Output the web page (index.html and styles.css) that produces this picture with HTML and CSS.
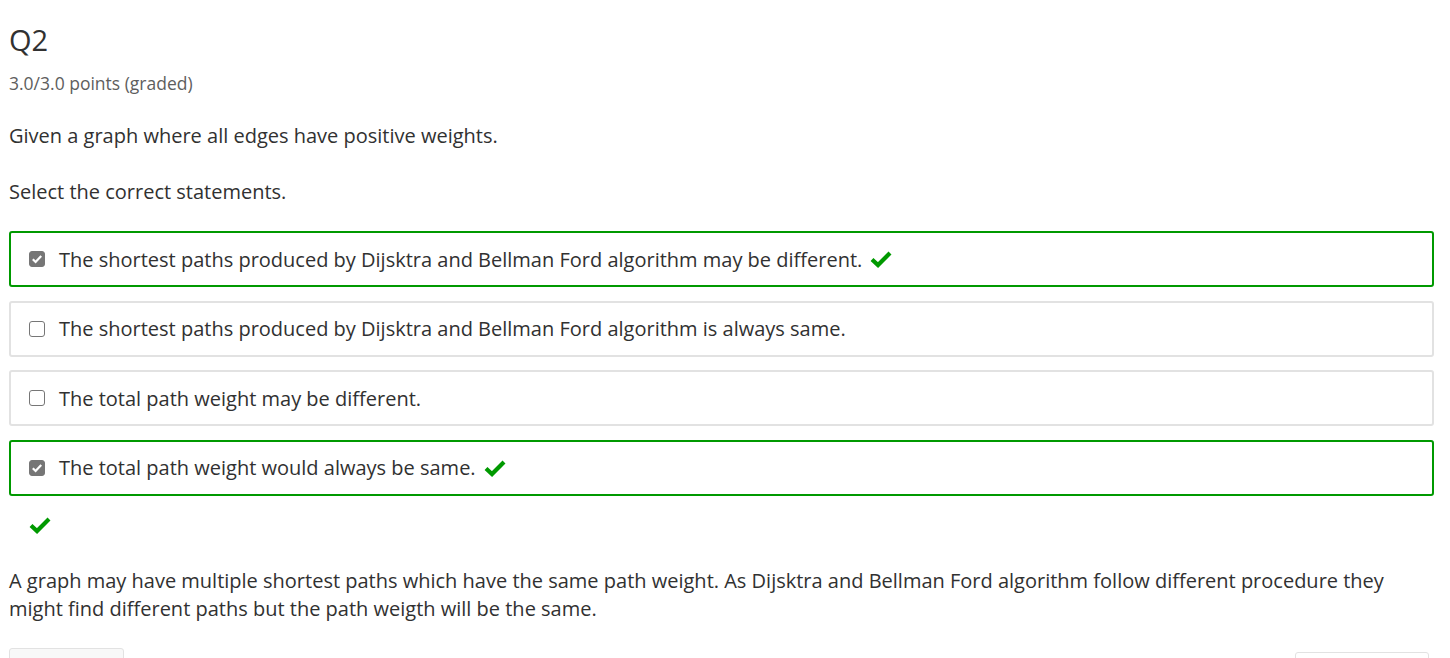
FILE: index.html
```html
<!DOCTYPE html>
<html>
<head>
<meta charset="utf-8">
<link rel="stylesheet" href="styles.css">
</head>
<body>
<div class="problem">
  <h2 class="title">Q2</h2>
  <div class="points">3.0/3.0 points (graded)</div>
  <p class="prompt">Given a graph where all edges have positive weights.</p>
  <p class="prompt">Select the correct statements.</p>
  <div class="choices">
    <label class="choice correct">
      <span class="box checked"><svg viewBox="0 0 16 16" width="16" height="16"><path d="M3.8 8.2 L6.6 11 L12.2 5" fill="none" stroke="#fff" stroke-width="2.2"/></svg></span>
      <span class="ctext">The shortest paths produced by Dijsktra and Bellman Ford algorithm may be different.</span>
      <svg class="tick" viewBox="0 0 22 18" width="22" height="18"><path d="M2 9.5 L8 15 L20 3" fill="none" stroke="#009900" stroke-width="4.2"/></svg>
    </label>
    <label class="choice">
      <span class="box"></span>
      <span class="ctext">The shortest paths produced by Dijsktra and Bellman Ford algorithm is always same.</span>
    </label>
    <label class="choice">
      <span class="box"></span>
      <span class="ctext">The total path weight may be different.</span>
    </label>
    <label class="choice correct">
      <span class="box checked"><svg viewBox="0 0 16 16" width="16" height="16"><path d="M3.8 8.2 L6.6 11 L12.2 5" fill="none" stroke="#fff" stroke-width="2.2"/></svg></span>
      <span class="ctext">The total path weight would always be same.</span>
      <svg class="tick" viewBox="0 0 22 18" width="22" height="18"><path d="M2 9.5 L8 15 L20 3" fill="none" stroke="#009900" stroke-width="4.2"/></svg>
    </label>
  </div>
  <div class="status"><svg viewBox="0 0 22 18" width="22" height="18"><path d="M2 9.5 L8 15 L20 3" fill="none" stroke="#009900" stroke-width="4.2"/></svg></div>
  <p class="explain">A graph may have multiple shortest paths which have the same path weight. As Dijsktra and Bellman Ford algorithm follow different procedure they might find different paths but the path weigth will be the same.</p>
  <div class="actions">
    <div class="btn left"></div>
    <div class="btn right"></div>
  </div>
</div>
</body>
</html>
```
FILE: styles.css
```css
html, body { margin: 0; padding: 0; background: #fff; }
body { font-family: "Open Sans", "Liberation Sans", sans-serif; color: #313131; overflow: hidden; }
.problem { padding: 0 16px 0 9px; }
.title { margin: 0; padding-top: 20px; font-size: 29px; font-weight: 400; line-height: 40px; color: #313131; }
.points { margin-top: 12px; font-size: 17.5px; color: #5e5e5e; line-height: 22px; }
.prompt { margin: 0; font-size: 20px; line-height: 28px; }
.points + .prompt { margin-top: 28px; }
.prompt + .prompt { margin-top: 28px; }
.choices { margin-top: 25px; display: flex; flex-direction: column; gap: 13.5px; }
.choice { display: flex; align-items: center; height: 52px; border: 2px solid #e2e2e2; border-radius: 3px; padding: 0 0 0 18px; font-size: 20px; }
.choice.correct { border-color: #009900; }
.box { width: 16px; height: 16px; box-sizing: border-box; border: 1px solid #767676; border-radius: 3px; background: #fff; display: inline-flex; margin-right: 14px; flex: none; }
.box.checked { background: #767676; border-color: #767676; }
.box svg { display: block; margin: -1px; }
.tick { margin-left: 8px; }
.status { margin: 20px 0 0 20px; height: 18px; }
.status svg { display: block; }
.explain { margin: 33px 0 0; font-size: 20px; line-height: 28px; }
.actions { display: flex; justify-content: space-between; margin-top: 25px; }
.btn { height: 30px; border: 1px solid #e2e2e2; border-radius: 3px; background: #f8f8f8; }
.btn.left { width: 113px; }
.btn.right { width: 132px; margin-top: 4px; background: #fff; margin-right: 5px; }
```
